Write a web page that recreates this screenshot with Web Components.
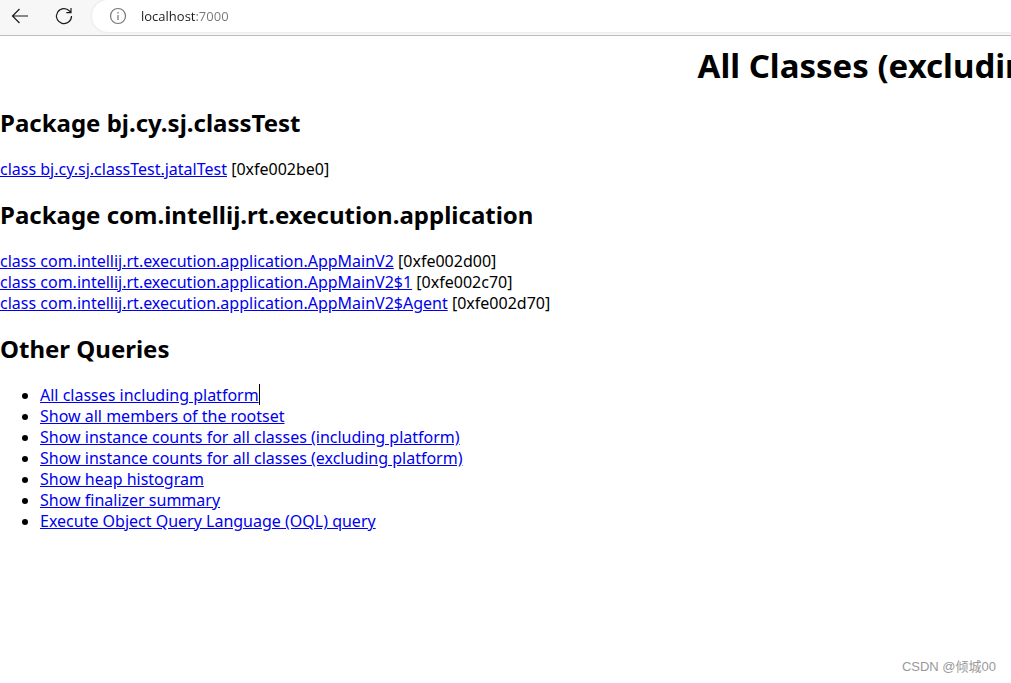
<!DOCTYPE html>
<html lang="en">
<head>
<meta charset="utf-8">
<title>All Classes (excluding platform)</title>
<style>
html,body{margin:0;min-height:100%;background:#fff}
body{font:16px/21px "Noto Sans","Noto Sans CJK SC",sans-serif;color:#000}
</style>
</head>
<body>
<heap-app></heap-app>
<script>
const define=(name,html,init)=>customElements.define(name,class extends HTMLElement{
  constructor(){
    super();
    const t=document.createElement('template');
    t.innerHTML=html;
    this.attachShadow({mode:'open'}).append(t.content.cloneNode(true));
  }
  connectedCallback(){ if(init) init(this,this.shadowRoot); }
});

define('browser-bar',`
<style>
:host{display:flex;align-items:center;height:35px;background:#f7f7f7;border-bottom:1px solid #bdbdbd;overflow:hidden}
button{all:unset;display:grid;place-items:center;width:20px;height:20px;margin:0 14px 4px 10px}
button+button{margin:0 18px 4px 10px}
svg{display:block;fill:none;stroke:#1b1b1b;stroke-width:1.2}
.address{flex:1;display:flex;align-items:center;gap:14px;height:32px;margin-bottom:4px;padding-left:17px;background:#fff;border-radius:16px 0 0 16px;box-shadow:0 0 3px #ddd}
.address svg{stroke:#757575;stroke-width:1.2}
input{flex:1;min-width:0;border:0;padding:0;outline:0;height:24px;font:13px/24px "Open Sans",sans-serif;color:#1b1b1b;-webkit-text-fill-color:transparent;background:linear-gradient(to right,#1b1b1b 55px,#757575 55px);-webkit-background-clip:text;background-clip:text}
</style>
<button aria-label="Back"><svg width="20" height="20" viewBox="0 0 20 20"><path d="M18 10H2.500M9.500 3L2.500 10l7 7"/></svg></button>
<button aria-label="Refresh"><svg width="20" height="20" viewBox="0 0 20 20"><path d="M17.500 10A7.500 7.500 0 1 1 15.500 5L17 6.500M17 2v4.700h-4.700"/></svg></button>
<div class="address">
<svg width="18" height="18" viewBox="0 0 18 18"><circle cx="9" cy="9" r="7.500"/><path d="M9 8v5M9 5v1.500"/></svg>
<input aria-label="Address" value="localhost:7000" spellcheck="false">
</div>`);

define('page-title',`
<style>
:host{display:block;overflow:hidden}
h1{margin:0;padding:10px 0 0 69%;font-size:33px;line-height:40px;font-weight:700;white-space:nowrap}
</style><h1><slot></slot></h1>`);

define('query-section',`
<style>
:host{display:block;margin-top:20px}
:host(:not(:first-of-type)){margin-top:18px}
h2{margin:0 0 20px;font-size:24px;line-height:33px;font-weight:700;white-space:nowrap}
</style><h2></h2><slot></slot>`,(el,r)=>{r.querySelector('h2').textContent=el.getAttribute('heading')});

define('class-entry',`
<style>
:host{display:block;white-space:nowrap}
a{color:#00e;text-decoration:underline}
</style><a href="#"><slot></slot></a> <span></span>`,(el,r)=>{r.querySelector('span').textContent='['+el.getAttribute('address')+']'});

define('query-link',`
<style>
:host{display:list-item;list-style:disc;margin-left:40px;white-space:nowrap}
a{color:#00e;text-decoration:underline}
:host([caret]) a{position:relative}
:host([caret]) a::after{content:"";position:absolute;right:-1px;top:0;width:1px;height:21px;background:#000}
</style><a href="#"><slot></slot></a>`);

define('water-mark',`
<style>
:host{position:absolute;right:15px;bottom:6px;font:13px/20px "Liberation Sans","Noto Sans CJK SC",sans-serif;color:#999}
</style><slot></slot>`);

define('heap-app',`
<style>
:host{display:block;position:relative;min-height:100vh;overflow:hidden}
</style>
<browser-bar></browser-bar>
<main>
<page-title>All Classes (excluding platform)</page-title>
<query-section heading="Package bj.cy.sj.classTest">
<class-entry address="0xfe002be0">class bj.cy.sj.classTest.jatalTest</class-entry>
</query-section>
<query-section heading="Package com.intellij.rt.execution.application">
<class-entry address="0xfe002d00">class com.intellij.rt.execution.application.AppMainV2</class-entry>
<class-entry address="0xfe002c70">class com.intellij.rt.execution.application.AppMainV2$1</class-entry>
<class-entry address="0xfe002d70">class com.intellij.rt.execution.application.AppMainV2$Agent</class-entry>
</query-section>
<query-section heading="Other Queries">
<div role="list">
<query-link role="listitem" caret>All classes including platform</query-link>
<query-link role="listitem">Show all members of the rootset</query-link>
<query-link role="listitem">Show instance counts for all classes (including platform)</query-link>
<query-link role="listitem">Show instance counts for all classes (excluding platform)</query-link>
<query-link role="listitem">Show heap histogram</query-link>
<query-link role="listitem">Show finalizer summary</query-link>
<query-link role="listitem">Execute Object Query Language (OQL) query</query-link>
</div>
</query-section>
</main>
<water-mark>CSDN @倾城00</water-mark>`);
</script>
</body>
</html>
